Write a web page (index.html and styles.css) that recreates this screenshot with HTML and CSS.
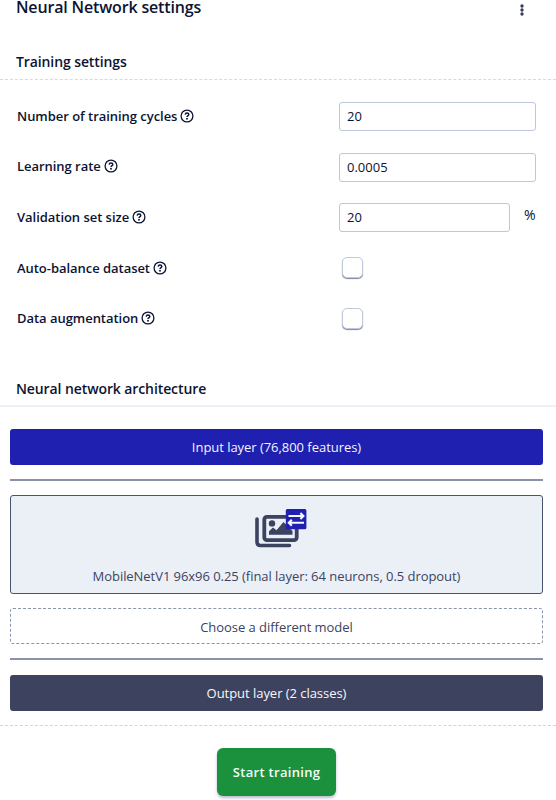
FILE: index.html
```html
<!DOCTYPE html>
<html lang="en">
<head>
<meta charset="utf-8">
<title>Neural Network settings</title>
<link rel="stylesheet" href="styles.css">
</head>
<body>
<svg class="defs" aria-hidden="true">
  <symbol id="help" viewBox="0 0 14 14">
    <circle cx="7" cy="7" r="5.9" fill="none" stroke="currentColor" stroke-width="1.3"/>
    <path d="M5.200 5.600C5.300 4.500 6 4 7 4s1.800.6 1.800 1.500C8.800 6.600 7 6.700 7 8" fill="none" stroke="currentColor" stroke-width="1.45"/>
    <circle cx="7" cy="9.800" r=".95" fill="currentColor"/>
  </symbol>
</svg>
<header class="header">
  <h1 class="title">Neural Network settings</h1>
  <svg class="menu" viewBox="0 0 4 12"><circle cx="2" cy="2" r="1.650"/><circle cx="2" cy="6" r="1.650"/><circle cx="2" cy="10" r="1.650"/></svg>
</header>
<h2 class="section first">Training settings</h2>
<form class="form">
  <div class="row"><label class="label"><span>Number of training cycles</span><svg class="help"><use href="#help"/></svg></label><div class="field">20</div></div>
  <div class="row"><label class="label"><span>Learning rate</span><svg class="help"><use href="#help"/></svg></label><div class="field">0.0005</div></div>
  <div class="row"><label class="label"><span>Validation set size</span><svg class="help"><use href="#help"/></svg></label><div class="field short">20</div><span class="unit">%</span></div>
  <div class="row"><label class="label"><span>Auto-balance dataset</span><svg class="help"><use href="#help"/></svg></label><div class="check"></div></div>
  <div class="row"><label class="label"><span>Data augmentation</span><svg class="help"><use href="#help"/></svg></label><div class="check"></div></div>
</form>
<h2 class="section second">Neural network architecture</h2>
<main class="layers">
  <div class="layer input"><span>Input layer (76,800 features)</span></div>
  <div class="line"></div>
  <div class="model">
    <svg class="icon" viewBox="0 0 54 42">
      <path d="M3 11V34Q3 37.500 6.500 37.500H35.500" fill="none" stroke="#3b4361" stroke-width="3.600" stroke-linecap="round"/>
      <rect x="10.300" y="8.800" width="32.400" height="23.400" rx="2.600" fill="#ebf0f7" stroke="#3b4361" stroke-width="3.800"/>
      <circle cx="18" cy="15.400" r="3.200" fill="#3b4361"/>
      <path d="M15 26.800V23.200L19 19.600L22.500 22.300L29.500 14L38.500 23V26.800Z" fill="#3b4361"/>
      <rect x="31.800" y="1" width="20.600" height="20.200" rx="1.500" fill="#1f1fb0"/>
      <path d="M34.500 8H48M46.400 5L49.400 8L46.400 11M50 14.700H36M37.800 11.700L34.800 14.700L37.800 17.700" fill="none" stroke="#f5f7ff" stroke-width="2.100"/>
    </svg>
    <span class="model-name">MobileNetV1 96x96 0.25 (final layer: 64 neurons, 0.5 dropout)</span>
  </div>
  <div class="layer choose"><span>Choose a different model</span></div>
  <div class="line thin"></div>
  <div class="layer output"><span>Output layer (2 classes)</span></div>
</main>
<footer class="footer"><button class="start">Start training</button></footer>
</body>
</html>
```

FILE: styles.css
```css
* { box-sizing: border-box; }
body { margin: 0; height: 800px; overflow: hidden; background: #fff; color: #0c1433; font-family: "Open Sans", sans-serif; font-size: 13px; }
.defs { display: none; }
.header { height: 48px; display: flex; justify-content: space-between; padding: 0 32px 0 16px; }
.title { margin: -4px 0 0; font-size: 16px; line-height: 22px; font-weight: 600; letter-spacing: -.16px; }
.menu { width: 4px; height: 12px; margin-top: 3.500px; fill: #303957; }
.section { margin: 0; padding-left: 16px; height: 32px; font-size: 14px; line-height: 27px; font-weight: 600; letter-spacing: -.1px; border-bottom: 1px dashed #d3d9e8; }
.form { padding: 11px 20px 0 17px; height: 294px; }
.row { height: 50.700px; display: flex; align-items: center; }
.label { width: 321.500px; margin-top: -1.500px; display: flex; align-items: center; gap: 3px; font-weight: 600; letter-spacing: -.04px; }
.help { width: 14px; height: 14px; }
.field { flex: 1; height: 29px; border: 1px solid #bdc6da; border-radius: 3px; padding: 0 7.500px; line-height: 27px; font-size: 13px; font-weight: 500; }
.field.short { flex: 0 0 171.500px; }
.unit { margin: -6px 0 0 14px; font-size: 14px; font-weight: 500; }
.check { width: 21px; height: 21px; margin: -2px 0 0 3.500px; border: 1px solid #c1c9dc; border-radius: 5px; box-shadow: 0 1px 1px #7c869b; background: #fff; }
.second { height: 33px; line-height: 30px; border-bottom: 2px solid #edf1f7; }
.layers { padding: 22px 13px 14px 10px; border-bottom: 1px dashed #cdd4e4; }
.layer { height: 36px; display: flex; align-items: center; justify-content: center; border-radius: 3px; font-size: 13px; letter-spacing: -.04px; }
.input { background: #1f1fb0; color: #f3f4ff; }
.line { height: 2px; margin: 14px 0; background: #8794a6; }
.thin { margin: 14px 0 15px; height: 1.500px; }
.model { height: 99px; margin-bottom: 14px; border: 1px solid #4a536d; border-radius: 3px; background: #ebf0f7; color: #3b4361; display: flex; flex-direction: column; align-items: center; padding-top: 12px; }
.icon { width: 54px; height: 42px; margin-left: 9px; }
.model-name { margin-top: 17px; line-height: 18px; white-space: nowrap; letter-spacing: -.05px; }
.choose { border: 1px dashed #8a94aa; color: #3b4361; padding-top: 1px; }
.output { background: #3d435f; color: #f7f8fc; }
.footer { display: flex; justify-content: center; padding: 22px 3px 0 0; }
.start { width: 119px; height: 48px; border: 0; border-radius: 6px; background: #1c913d; color: #f4fff7; font-family: inherit; font-size: 13px; font-weight: 600; letter-spacing: .3px; padding: 0; box-shadow: 0 2px 3px #b4bdd0; }
```
